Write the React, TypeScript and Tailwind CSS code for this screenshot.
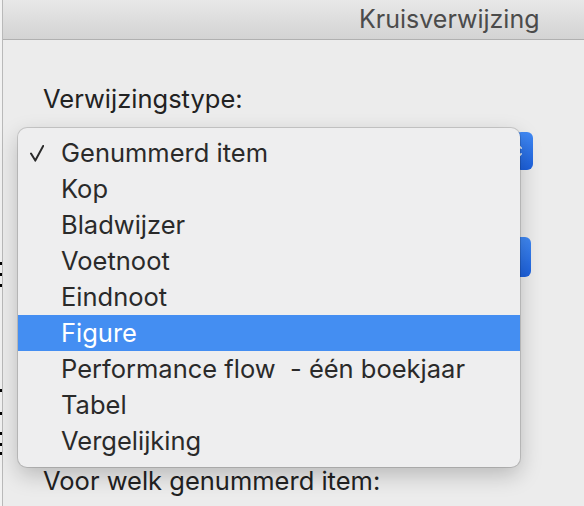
const items = [
  'Genummerd item',
  'Kop',
  'Bladwijzer',
  'Voetnoot',
  'Eindnoot',
  'Figure',
  'Performance flow  - één boekjaar',
  'Tabel',
  'Vergelijking',
];

const font = { fontFamily: 'Inter, "Noto Sans", "Liberation Sans", sans-serif' };

function CheckMark() {
  return (
    <svg width="14" height="17" viewBox="0 0 14 17" fill="none">
      <path d="M1 8.6 L5.3 15.6 L13.2 1" stroke="currentColor" strokeWidth="2" strokeLinecap="round" strokeLinejoin="round" />
    </svg>
  );
}

function Stepper({ h }: { h: number }) {
  return (
    <div
      className="w-[18px] h-full rounded-[6px] bg-gradient-to-b from-[#4189f4] to-[#1c60dc] flex items-center"
      style={{ height: h }}
    >
      <svg width="12" height="24" viewBox="0 0 12 24" fill="none" className="-ml-[4px]">
        <path d="M2 9 L6 4.5 L10 9" stroke="white" strokeWidth="1.8" strokeLinecap="round" strokeLinejoin="round" />
        <path d="M2 15 L6 19.5 L10 15" stroke="white" strokeWidth="1.8" strokeLinecap="round" strokeLinejoin="round" />
      </svg>
    </div>
  );
}

export default function App() {
  const selected = 'Genummerd item';
  const highlighted = 'Figure';

  return (
    <div className="relative w-[584px] h-[506px] overflow-hidden flex bg-[#ececec]" style={font}>
      {/* Left edge of whatever lies behind the dialog */}
      <div className="w-[3px] h-full shrink-0 bg-[#f2f2f2] border-r border-[#b9b9b9] flex flex-col items-start">
        <div className="mt-[262px] w-[2px] h-[3px] bg-black" />
        <div className="mt-[8px] w-[2px] h-[3px] bg-black" />
        <div className="mt-[8px] w-[2px] h-[3px] bg-black" />
        <div className="mt-[102px] w-[2px] h-[3px] bg-black" />
        <div className="mt-[20px] w-[2px] h-[3px] bg-black" />
        <div className="mt-[17px] w-[2px] h-[3px] bg-black" />
        <div className="mt-[8px] w-[2px] h-[3px] bg-black" />
        <div className="mt-[6px] w-[2px] h-[3px] bg-black" />
      </div>

      {/* Dialog window */}
      <div className="flex-1 flex flex-col">
        <div className="h-[40px] shrink-0 bg-gradient-to-b from-[#e8e8e8] to-[#d3d3d3] border-b border-[#b0b0b0] flex items-center pb-[1px]">
          <span className="ml-[356px] text-[25px] text-[#4b4b4b] leading-none whitespace-nowrap">Kruisverwijzing</span>
        </div>

        <div className="flex-1 pl-[40px]">
          <p className="mt-[46px] h-[26px] text-[25.5px] text-[#222] leading-[26px] whitespace-nowrap">Verwijzingstype:</p>
          <div className="mt-[20px] h-[38px] flex justify-end pr-[51px]">
            <Stepper h={38} />
          </div>
          <div className="mt-[67px] h-[40px] flex justify-end pr-[53px]">
            <Stepper h={40} />
          </div>
          <p className="mt-[191px] h-[26px] text-[25.5px] text-[#222] leading-[26px] whitespace-nowrap">Voor welk genummerd item:</p>
        </div>
      </div>

      {/* Open popup menu */}
      <div className="absolute left-[18px] top-[128px] w-[502px] h-[339px] rounded-[9px] bg-[#eeeeef] shadow-[0_0_0_1px_rgba(0,0,0,0.14),0_8px_22px_rgba(0,0,0,0.22)] pt-[7px] overflow-hidden">
        {items.map(item => {
          const isHi = item === highlighted;
          return (
            <div
              key={item}
              className={`h-[36px] flex items-center ${isHi ? 'bg-[#448ef2] text-white' : 'text-[#2a2a2a]'}`}
            >
              <div className="w-[43px] shrink-0 pl-[12px] flex items-center">
                {item === selected && <CheckMark />}
              </div>
              <span className="text-[25.5px] leading-none whitespace-pre">{item}</span>
            </div>
          );
        })}
      </div>
    </div>
  );
}
